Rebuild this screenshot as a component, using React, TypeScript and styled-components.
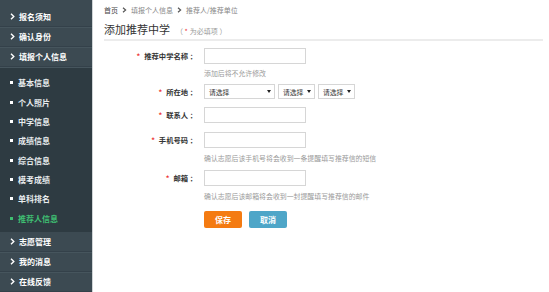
import styled, { createGlobalStyle } from "styled-components";

const Global = createGlobalStyle`
  html, body { margin: 0; padding: 0; background: #fff; }
  body { font-family: "Noto Sans CJK SC", "Noto Sans", sans-serif; }
`;

const Page = styled.div`
  display: flex;
  width: 549px;
  height: 292px;
  overflow: hidden;
`;

const Sidebar = styled.nav`
  width: 92px;
  flex: none;
  background: #3c4a52;
  border-right: 1px solid #cfd4d6;
  display: flex;
  flex-direction: column;
  padding-top: 7px;
`;

const TopItem = styled.div`
  display: flex;
  align-items: center;
  height: 20px;
  padding-left: 10px;
  gap: 4px;
  color: #fff;
  font-size: 8px;
  font-weight: 700;
  border-bottom: 1px solid #34414a;
  box-shadow: 0 1px 0 #46555d;
`;

const SubMenu = styled.div`
  background: #2e3b42;
  padding: 5px 0 4px;
  margin-top: 1px;
`;

const SubItem = styled.div<{ active?: boolean }>`
  display: flex;
  align-items: center;
  height: 19.4px;
  padding-left: 10px;
  gap: 5px;
  font-size: 8px;
  font-weight: 700;
  color: ${({ active }) => (active ? "#3fbf72" : "#e8ecee")};
  &::before {
    content: "";
    width: 3px;
    height: 3px;
    background: ${({ active }) => (active ? "#3fbf72" : "#fff")};
  }
`;

const Main = styled.main`
  flex: 1;
  padding: 4px 6px 0 11px;
  display: flex;
  flex-direction: column;
`;

const Crumbs = styled.div`
  display: flex;
  align-items: center;
  gap: 4px;
  height: 12px;
  font-size: 7px;
  color: #888;
  & b { color: #444; font-weight: 400; }
`;

const TitleBar = styled.div`
  display: flex;
  align-items: baseline;
  margin-top: 5px;
  padding-bottom: 2px;
  border-bottom: 2px solid #ececec;
`;

const Title = styled.h1`
  margin: 0;
  font-size: 11px;
  line-height: 16px;
  font-weight: 400;
  color: #333;
`;

const Required = styled.span`
  margin-left: 6px;
  font-size: 7px;
  color: #999;
  & i { font-style: normal; color: #e33; margin-right: 2px; }
`;

const Form = styled.div`
  display: flex;
  flex-direction: column;
`;

const Field = styled.div<{ mt: number }>`
  display: grid;
  grid-template-columns: 93px auto;
  column-gap: 7px;
  align-items: center;
  margin-top: ${({ mt }) => mt}px;
`;

const Label = styled.label`
  text-align: right;
  font-size: 7.3px;
  font-weight: 700;
  color: #333;
  &::before {
    content: "*";
    color: #e33;
    margin-right: 4px;
  }
`;

const Input = styled.div`
  width: 100px;
  height: 14px;
  border: 1px solid #d6d6d6;
  background: #fff;
`;

const Hint = styled.div<{ mt: number }>`
  margin: ${({ mt }) => mt}px 0 0 100px;
  font-size: 6.9px;
  line-height: 14px;
  color: #9a9a9a;
  white-space: nowrap;
`;

const Selects = styled.div`
  display: flex;
  gap: 3px;
`;

const Select = styled.div<{ w: number }>`
  width: ${({ w }) => w}px;
  height: 15px;
  border: 1px solid #d6d6d6;
  display: flex;
  align-items: center;
  justify-content: space-between;
  padding: 0 3px 0 4px;
  box-sizing: border-box;
  font-size: 6.8px;
  color: #333;
  &::after {
    content: "";
    border-left: 2px solid transparent;
    border-right: 2px solid transparent;
    border-top: 3px solid #222;
  }
`;

const Buttons = styled.div`
  display: flex;
  gap: 7px;
  margin: 8px 0 0 100px;
`;

const Button = styled.button<{ tone: string }>`
  width: 38px;
  height: 17px;
  border: none;
  border-radius: 2px;
  background: ${({ tone }) => tone};
  color: #fff;
  font-family: inherit;
  font-size: 8px;
  font-weight: 700;
  padding: 0;
`;

const Chevron = () => (
  <svg width="5" height="7" viewBox="0 0 5 7">
    <path d="M1 0.8 L3.8 3.5 L1 6.2" fill="none" stroke="#fff" strokeWidth="1.4" />
  </svg>
);

const Arrow = () => (
  <svg width="5" height="6" viewBox="0 0 5 6">
    <path d="M1 0.8 L3.6 3 L1 5.2" fill="none" stroke="#555" strokeWidth="1.2" />
  </svg>
);

const subItems = ["基本信息", "个人照片", "中学信息", "成绩信息", "综合信息", "模考成绩", "单科排名", "推荐人信息"];

export default function App() {
  return (
    <>
      <Global />
      <Page>
        <Sidebar>
          <TopItem><Chevron />报名须知</TopItem>
          <TopItem><Chevron />确认身份</TopItem>
          <TopItem><Chevron />填报个人信息</TopItem>
          <SubMenu>
            {subItems.map((s) => (
              <SubItem key={s} active={s === "推荐人信息"}>{s}</SubItem>
            ))}
          </SubMenu>
          <TopItem><Chevron />志愿管理</TopItem>
          <TopItem><Chevron />我的消息</TopItem>
          <TopItem><Chevron />在线反馈</TopItem>
        </Sidebar>
        <Main>
          <Crumbs>
            <b>首页</b><Arrow />填报个人信息<Arrow />推荐人/推荐单位
          </Crumbs>
          <TitleBar>
            <Title>添加推荐中学</Title>
            <Required>（ <i>*</i>为必填项 ）</Required>
          </TitleBar>
          <Form>
            <Field mt={7}>
              <Label>推荐中学名称 ：</Label>
              <Input />
            </Field>
            <Hint mt={2}>添加后将不允许修改</Hint>
            <Field mt={4}>
              <Label>所在地 ：</Label>
              <Selects>
                <Select w={71}>请选择</Select>
                <Select w={37}>请选择</Select>
                <Select w={37}>请选择</Select>
              </Selects>
            </Field>
            <Field mt={8}>
              <Label>联系人 ：</Label>
              <Input />
            </Field>
            <Field mt={9}>
              <Label>手机号码 ：</Label>
              <Input />
            </Field>
            <Hint mt={3}>确认志愿后该手机号将会收到一条提醒填写推荐信的短信</Hint>
            <Field mt={5}>
              <Label>邮箱 ：</Label>
              <Input />
            </Field>
            <Hint mt={3}>确认志愿后该邮箱将会收到一封提醒填写推荐信的邮件</Hint>
            <Buttons>
              <Button tone="#f47b12">保存</Button>
              <Button tone="#4ea6c8">取消</Button>
            </Buttons>
          </Form>
        </Main>
      </Page>
    </>
  );
}
